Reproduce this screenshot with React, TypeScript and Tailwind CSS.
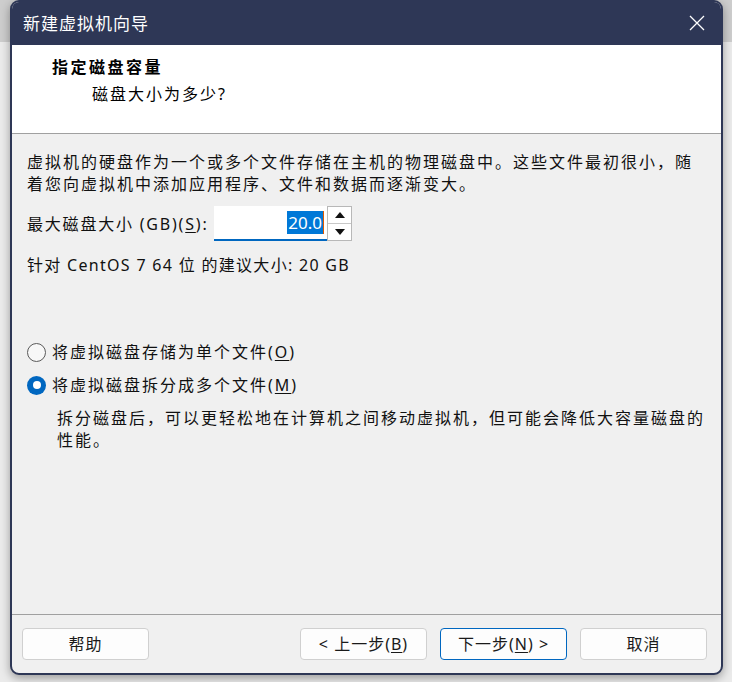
import React from "react";

const FONT = { fontFamily: '"Noto Sans", "Noto Sans CJK SC", sans-serif' };

function Key({ k }: { k: string }) {
  return (
    <>
      (<span className="underline underline-offset-2">{k}</span>)
    </>
  );
}

function Radio({ checked }: { checked?: boolean }) {
  if (checked) {
    return (
      <span className="flex h-[19px] w-[19px] items-center justify-center rounded-full bg-[#0067c0]">
        <span className="h-[8px] w-[8px] rounded-full bg-white" />
      </span>
    );
  }
  return <span className="h-[19px] w-[19px] rounded-full border border-[#5a5a5a] bg-[#f7f7f7]" />;
}

function Btn({ children, primary }: { children: React.ReactNode; primary?: boolean }) {
  return (
    <button
      className={
        primary
          ? "flex h-[32px] w-[127px] items-center justify-center rounded-[4px] border border-[#0067c0] bg-[#fdfdfd] text-[16px] tracking-[1px] text-[#1a1a1a]"
          : "flex h-[32px] w-[127px] items-center justify-center rounded-[4px] border border-[#d0d0d0] bg-[#fdfdfd] text-[16px] tracking-[1px] text-[#1a1a1a]"
      }
    >
      {children}
    </button>
  );
}

export default function App() {
  return (
    <div
      className="h-[682px] w-[732px] overflow-hidden bg-[linear-gradient(to_bottom,#cdcdcd_0,#cdcdcd_42px,#ebebeb_42px)] pl-[10px]"
      style={FONT}
    >
      <div className="flex h-[675px] w-[713px] flex-col overflow-hidden rounded-[9px] border-2 border-[#2e3756] bg-[#f0f0f0] shadow-[0_3px_10px_rgba(0,0,0,0.35)]">
        {/* title bar */}
        <div className="flex h-[43px] shrink-0 items-center justify-between bg-[#2e3756] pl-[11px] pr-[16px]">
          <span className="text-[17px] tracking-[1px] text-white">新建虚拟机向导</span>
          <svg width="16" height="16" viewBox="0 0 16 16" className="mb-[2px]">
            <path d="M1 1L15 15M15 1L1 15" stroke="white" strokeWidth="1.3" />
          </svg>
        </div>

        {/* header */}
        <div className="h-[89px] shrink-0 border-b border-[#a0a0a0] bg-white pl-[40px] pt-[11px] text-[16px] leading-[22px] tracking-[2px] text-black">
          <div className="font-bold tracking-[2.5px]">指定磁盘容量</div>
          <div className="mt-[5px] pl-[40px]">磁盘大小为多少?</div>
        </div>

        {/* body */}
        <div className="flex-1 pl-[15px] pt-[17px] text-[16px] leading-[22px] tracking-[2px] text-[#111]">
          <p>
            虚拟机的硬盘作为一个或多个文件存储在主机的物理磁盘中。这些文件最初很小，随
            <br />
            着您向虚拟机中添加应用程序、文件和数据而逐渐变大。
          </p>

          <div className="mt-[11px] flex h-[35px] items-center">
            <span className="w-[187px] tracking-[1.8px]">
              最大磁盘大小 (GB)<Key k="S" />:
            </span>
            <div className="flex h-[35px] w-[113px] items-center justify-end border-b-2 border-[#0067c0] bg-white pr-[3px] tracking-normal">
              <span className="flex h-[23px] items-center bg-[#0078d7] px-[1px] text-[17px] text-white">20.0</span>
              <span className="h-[23px] w-[1px] bg-[#e05a00]" />
            </div>
            <div className="flex h-[35px] w-[25px] flex-col border border-[#b8b8b8] bg-white">
              <div className="flex flex-1 items-center justify-center border-b border-[#c8c8c8]">
                <svg width="10" height="6" viewBox="0 0 10 6">
                  <path d="M5 0L10 6H0Z" fill="#111" />
                </svg>
              </div>
              <div className="flex flex-1 items-center justify-center">
                <svg width="10" height="6" viewBox="0 0 10 6">
                  <path d="M0 0H10L5 6Z" fill="#111" />
                </svg>
              </div>
            </div>
          </div>

          <div className="mt-[13px] tracking-[1.3px]">针对 CentOS 7 64 位 的建议大小: 20 GB</div>

          <div className="mt-[65px] flex items-center gap-[6px]">
            <Radio />
            <span>
              将虚拟磁盘存储为单个文件<Key k="O" />
            </span>
          </div>
          <div className="mt-[11px] flex items-center gap-[6px]">
            <Radio checked />
            <span>
              将虚拟磁盘拆分成多个文件<Key k="M" />
            </span>
          </div>
          <p className="mt-[11px] pl-[30px]">
            拆分磁盘后，可以更轻松地在计算机之间移动虚拟机，但可能会降低大容量磁盘的
            <br />
            性能。
          </p>
        </div>

        {/* footer */}
        <div className="flex shrink-0 items-center border-t border-[#a0a0a0] px-[10px] pb-[13px] pt-[13px]">
          <Btn>帮助</Btn>
          <div className="ml-auto flex gap-[13px] pr-[4px]">
            <Btn>
              &lt; 上一步<Key k="B" />
            </Btn>
            <Btn primary>
              下一步<Key k="N" /> &gt;
            </Btn>
            <Btn>取消</Btn>
          </div>
        </div>
      </div>
    </div>
  );
}
